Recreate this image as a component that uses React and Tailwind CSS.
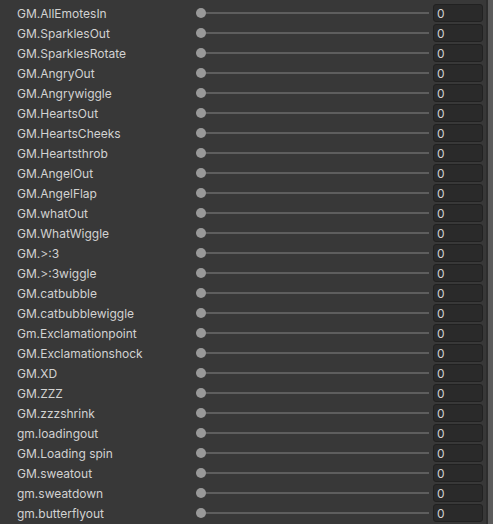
import React from 'react'

const shapes = [
  'GM.AllEmotesIn',
  'GM.SparklesOut',
  'GM.SparklesRotate',
  'GM.AngryOut',
  'GM.Angrywiggle',
  'GM.HeartsOut',
  'GM.HeartsCheeks',
  'GM.Heartsthrob',
  'GM.AngelOut',
  'GM.AngelFlap',
  'GM.whatOut',
  'GM.WhatWiggle',
  'GM.>:3',
  'GM.>:3wiggle',
  'GM.catbubble',
  'GM.catbubblewiggle',
  'Gm.Exclamationpoint',
  'GM.Exclamationshock',
  'GM.XD',
  'GM.ZZZ',
  'GM.zzzshrink',
  'gm.loadingout',
  'GM.Loading spin',
  'GM.sweatout',
  'gm.sweatdown',
  'gm.butterflyout',
]

const Row = ({ name }) => (
  <div className="flex h-5 items-center">
    <div className="w-[184px] shrink-0 pl-[17px] pt-px text-[12px] text-[#d2d2d2] truncate">{name}</div>
    <div className="relative flex h-5 w-[245px] shrink-0 items-center">
      <div className="ml-[12px] h-[2px] w-[233px] bg-[#5e5e5e]" />
      <div className="absolute left-[12px] top-[5px] h-[10px] w-[10px] rounded-full bg-[#999999]" />
    </div>
    <div className="ml-[4px] flex h-[18px] w-[50px] shrink-0 items-center rounded-[3px] border border-[#212121] bg-[#2a2a2a] pl-[3px] pt-px text-[12px] text-[#d2d2d2]">
      0
    </div>
  </div>
)

export default function App() {
  return (
    <div className="flex h-[524px] w-[493px] overflow-hidden bg-[#383838]" style={{ fontFamily: 'Inter, "Noto Sans", sans-serif' }}>
      <div className="flex w-[486px] shrink-0 flex-col pt-[3px]">
        {shapes.map((s) => (
          <Row key={s} name={s} />
        ))}
      </div>
      <div className="w-[2px] shrink-0 bg-[#2e2e2e]" />
      <div className="w-[5px] shrink-0 bg-[#5b5b5b]" />
    </div>
  )
}
